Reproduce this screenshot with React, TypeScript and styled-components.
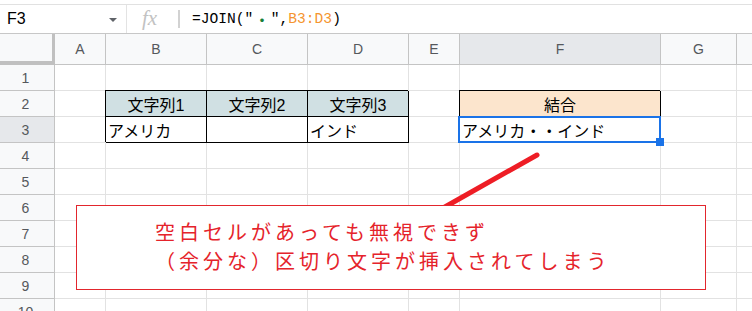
import React from 'react';
import styled, { createGlobalStyle, css } from 'styled-components';

const GlobalStyle = createGlobalStyle`
  html, body {
    margin: 0;
    padding: 0;
    background: #fff;
    overflow: hidden;
  }
  body {
    font-family: 'Liberation Sans', 'Noto Sans CJK JP', sans-serif;
  }
`;

// the last column is only partly visible, so its letter is out of view
const columns = ['A', 'B', 'C', 'D', 'E', 'F', 'G', 'H'];
const visibleLabels: Record<string, boolean> = { H: false };
const rows = [1, 2, 3, 4, 5, 6, 7, 8, 9, 10];

type CellData = {
  text: string;
  center?: boolean;
  fill?: string;
  boxed?: boolean;
  selected?: boolean;
};

const cells: Record<string, CellData> = {
  B2: { text: '文字列1', center: true, fill: '#d0e0e3', boxed: true },
  C2: { text: '文字列2', center: true, fill: '#d0e0e3', boxed: true },
  D2: { text: '文字列3', center: true, fill: '#d0e0e3', boxed: true },
  B3: { text: 'アメリカ', boxed: true },
  C3: { text: '', boxed: true },
  D3: { text: 'インド', boxed: true },
  F2: { text: '結合', center: true, fill: '#fce5cd', boxed: true },
  F3: { text: 'アメリカ・・インド', boxed: true, selected: true },
};

const selectedCol = 'F';
const selectedRow = 3;

function App(): JSX.Element {
  return (
    <Page>
      <GlobalStyle />
      <FormulaBar>
        <NameBox>
          <span>F3</span>
          <DropArrow />
        </NameBox>
        <FxBox>
          <FxLabel>fx</FxLabel>
        </FxBox>
        <FormulaText>
          =JOIN(&quot;<Str>・</Str>&quot;,<Range>B3:D3</Range>)
        </FormulaText>
      </FormulaBar>

      <Sheet>
        <Corner />
        {columns.map((c) => (
          <ColHeader key={c} $active={c === selectedCol}>
            {visibleLabels[c] === false ? '' : c}
          </ColHeader>
        ))}
        {rows.map((r) => (
          <React.Fragment key={r}>
            <RowHeader $active={r === selectedRow}>{r}</RowHeader>
            {columns.map((c) => {
              const data = cells[`${c}${r}`];
              return (
                <Cell
                  key={`${c}${r}`}
                  $center={data?.center}
                  $fill={data?.fill}
                  $boxed={data?.boxed}
                >
                  {data?.text}
                  {data?.selected && (
                    <Selection>
                      <FillHandle />
                    </Selection>
                  )}
                </Cell>
              );
            })}
          </React.Fragment>
        ))}
      </Sheet>

      <Arrow width="752" height="311" viewBox="0 0 752 311">
        <line x1="436" y1="212" x2="537" y2="155" stroke="#ee1d25" strokeWidth="5" strokeLinecap="round" />
      </Arrow>

      <Callout>
        <CalloutLine>空白セルがあっても無視できず</CalloutLine>
        <CalloutLine>（余分な）区切り文字が挿入されてしまう</CalloutLine>
      </Callout>
    </Page>
  );
}

const Page = styled.div`
  position: relative;
  width: 752px;
  height: 311px;
  overflow: hidden;
  background: #fff;
`;

const FormulaBar = styled.div`
  margin-top: 4px;
  height: 28px;
  border-top: 1px solid #e1e1e1;
  border-bottom: 1px solid #c7c7c7;
  display: flex;
  align-items: stretch;
`;

const NameBox = styled.div`
  width: 127px;
  box-sizing: border-box;
  padding: 0 9px 0 7px;
  display: flex;
  align-items: center;
  justify-content: space-between;
  font-size: 16px;
  color: #000;
  border-right: 1px solid #e3e3e3;
`;

const DropArrow = styled.span`
  width: 0;
  height: 0;
  border-left: 4px solid transparent;
  border-right: 4px solid transparent;
  border-top: 4px solid #5f6368;
  margin-top: 2px;
`;

const FxBox = styled.div`
  width: 53px;
  display: flex;
  align-items: center;
  justify-content: space-between;
  padding-left: 15px;
  box-sizing: border-box;
  &::after {
    content: '';
    width: 2px;
    height: 18px;
    background: #d2d2d2;
  }
`;

const FxLabel = styled.span`
  font-family: 'Liberation Serif', 'DejaVu Serif', serif;
  font-style: italic;
  font-size: 21px;
  color: #c2c2c2;
  line-height: 1;
  margin-top: -2px;
`;

const FormulaText = styled.div`
  padding-left: 12px;
  display: flex;
  align-items: center;
  font-family: 'Liberation Mono', 'Noto Sans CJK JP', monospace;
  font-size: 14.6px;
  color: #000;
  white-space: pre;
`;

const Str = styled.span`
  display: inline-block;
  width: 17.5px;
  text-align: center;
  color: #188038;
  font-family: 'Noto Sans CJK JP', sans-serif;
  font-size: 14px;
  font-weight: 700;
`;

const Range = styled.span`
  color: #f5952f;
`;

const Sheet = styled.div`
  display: grid;
  grid-template-columns: 55px 51px 101px 101px 101px 51px 201px 76px 120px;
  grid-template-rows: 31px repeat(10, 26px);
`;

const headerBase = css`
  box-sizing: border-box;
  display: flex;
  align-items: center;
  justify-content: center;
  font-family: 'Liberation Sans', Arial, sans-serif;
  font-size: 14px;
  color: #55585c;
`;

const Corner = styled.div`
  box-sizing: border-box;
  background: #f8f9fa;
  border-right: 3px solid #c0c0c0;
  border-bottom: 4px solid #c0c0c0;
`;

const ColHeader = styled.div<{ $active?: boolean }>`
  ${headerBase};
  background: ${(p) => (p.$active ? '#e6e8eb' : '#f8f9fa')};
  border-right: 1px solid #c4c4c4;
  border-bottom: 1px solid #c4c4c4;
`;

const RowHeader = styled.div<{ $active?: boolean }>`
  ${headerBase};
  background: ${(p) => (p.$active ? '#e6e8eb' : '#f8f9fa')};
  border-right: 1px solid #c4c4c4;
  border-bottom: 1px solid #c4c4c4;
  padding-right: 3px;
`;

const Cell = styled.div<{ $center?: boolean; $fill?: string; $boxed?: boolean }>`
  position: relative;
  box-sizing: border-box;
  display: flex;
  align-items: center;
  justify-content: ${(p) => (p.$center ? 'center' : 'flex-start')};
  padding: 1px 2px 0;
  font-family: 'Liberation Sans', 'Noto Sans CJK JP', sans-serif;
  font-size: 16px;
  color: #000;
  white-space: nowrap;
  background: ${(p) => p.$fill || '#fff'};
  border-right: 1px solid ${(p) => (p.$boxed ? '#000' : '#e2e2e2')};
  border-bottom: 1px solid ${(p) => (p.$boxed ? '#000' : '#e2e2e2')};
  box-shadow: ${(p) => (p.$boxed ? '-1px -1px 0 0 #000' : 'none')};
`;

const Selection = styled.div`
  position: absolute;
  top: -1px;
  left: -2px;
  right: -1px;
  bottom: -1px;
  border: 2px solid #1a73e8;
  z-index: 2;
`;

const FillHandle = styled.div`
  position: absolute;
  width: 8px;
  height: 8px;
  right: -5px;
  bottom: -5px;
  background: #1a73e8;
`;

const Arrow = styled.svg`
  position: absolute;
  left: 0;
  top: 0;
  z-index: 3;
  pointer-events: none;
`;

const Callout = styled.div`
  position: absolute;
  left: 76px;
  top: 205px;
  width: 630px;
  height: 85px;
  box-sizing: border-box;
  border: 1px solid #e2262d;
  background: #fff;
  z-index: 4;
  display: flex;
  flex-direction: column;
  justify-content: center;
  padding: 0 0 4px 78px;
`;

const CalloutLine = styled.div`
  font-family: 'Noto Sans CJK JP', sans-serif;
  font-size: 20px;
  line-height: 29px;
  letter-spacing: 4px;
  color: #e5232b;
  white-space: nowrap;
`;

export default App;
